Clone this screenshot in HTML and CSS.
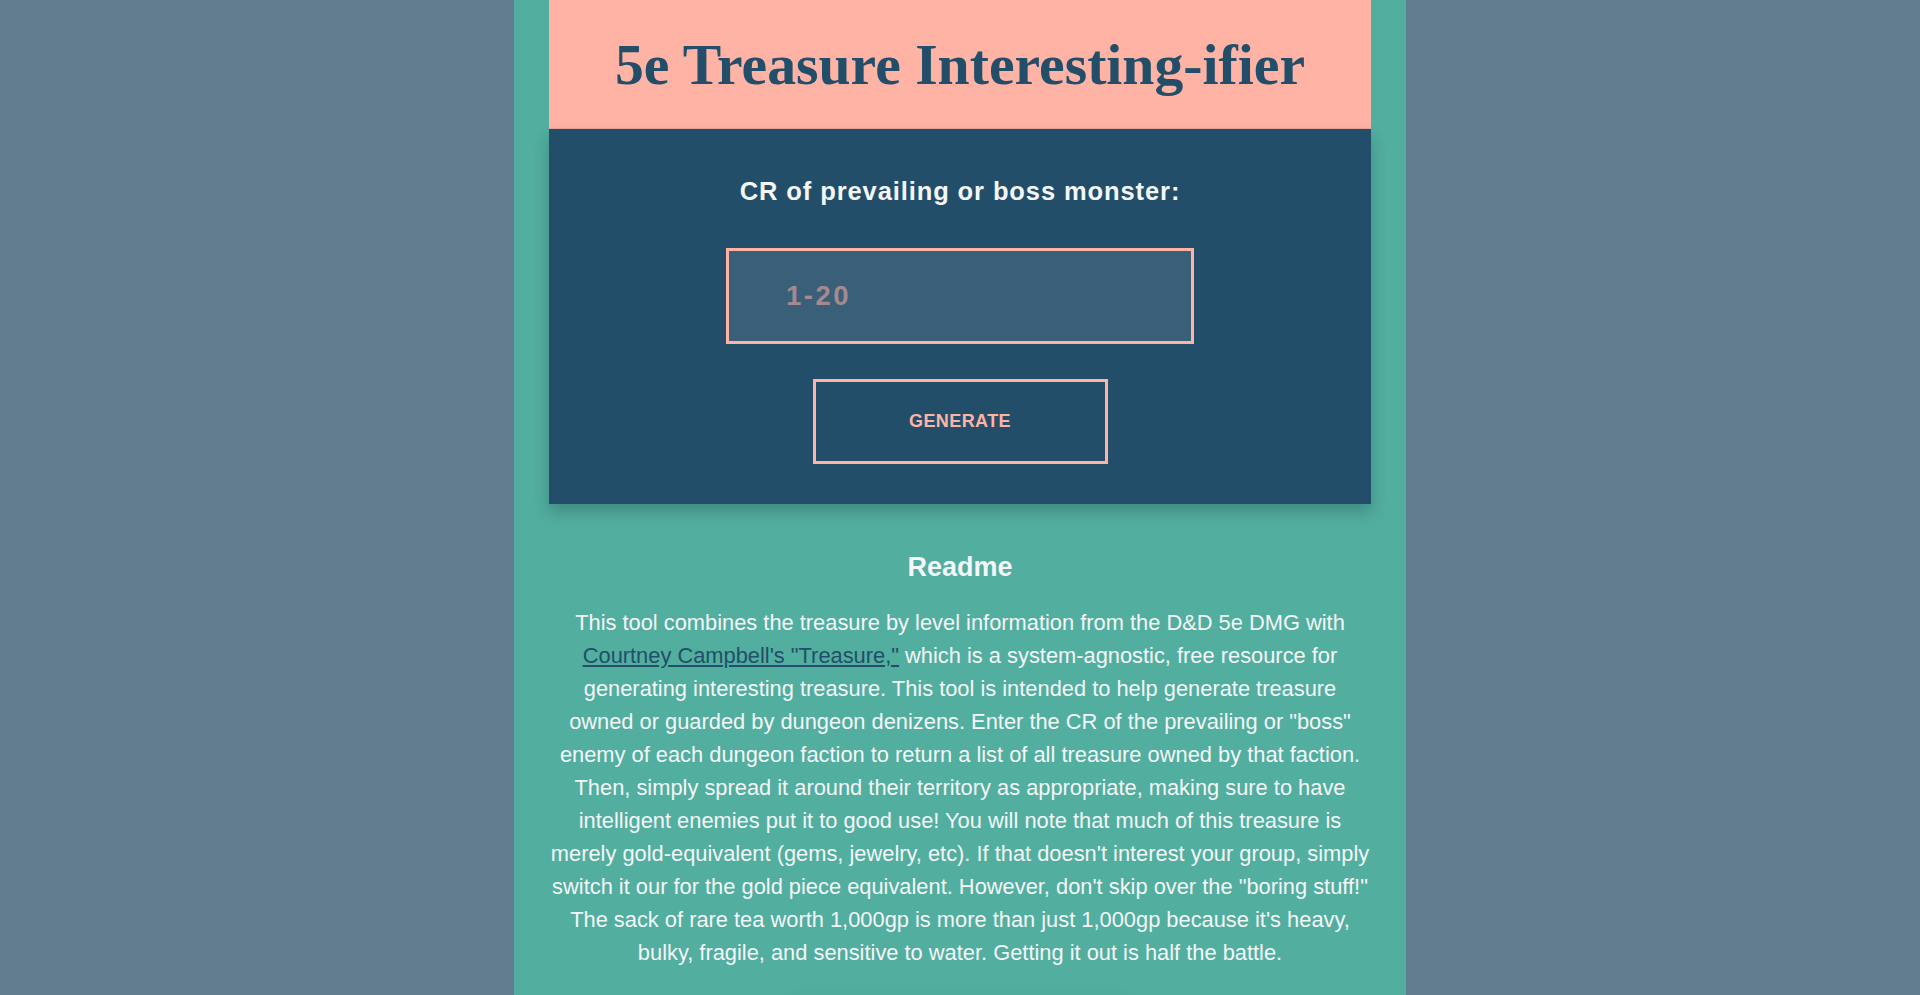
FILE: index.html
```html
<!DOCTYPE html>
<html lang="en">
<head>
<meta charset="utf-8">
<title>5e Treasure Interesting-ifier</title>
<link rel="stylesheet" href="styles.css">
</head>
<body>
<main class="page">
  <header class="banner">
    <h1 class="title">5e Treasure Interesting-ifier</h1>
  </header>
  <section class="tool">
    <label class="tool-label" for="cr">CR of prevailing or boss monster:</label>
    <input class="cr-input" id="cr" type="text" placeholder="1-20">
    <button class="generate" type="button">GENERATE</button>
  </section>
  <section class="readme">
    <h2 class="readme-title">Readme</h2>
    <p class="readme-text">This tool combines the treasure by level information from the D&amp;D 5e DMG with <a class="readme-link" href="#">Courtney Campbell's "Treasure,"</a> which is a system-agnostic, free resource for generating interesting treasure. This tool is intended to help generate treasure owned or guarded by dungeon denizens. Enter the CR of the prevailing or "boss" enemy of each dungeon faction to return a list of all treasure owned by that faction. Then, simply spread it around their territory as appropriate, making sure to have intelligent enemies put it to good use! You will note that much of this treasure is merely gold-equivalent (gems, jewelry, etc). If that doesn't interest your group, simply switch it our for the gold piece equivalent. However, don't skip over the "boring stuff!" The sack of rare tea worth 1,000gp is more than just 1,000gp because it's heavy, bulky, fragile, and sensitive to water. Getting it out is half the battle.</p>
  </section>
  <div class="results"></div>
</main>
</body>
</html>
```
FILE: styles.css
```css
html, body {
  margin: 0;
  padding: 0;
}
body {
  background: #627d8f;
  font-family: "Liberation Sans", Arial, sans-serif;
}
.page {
  width: 892px;
  margin: 0 auto;
  padding: 0 35px 40px;
  box-sizing: border-box;
  background: #52ae9f;
  min-height: 100vh;
  display: flex;
  flex-direction: column;
}
.banner {
  height: 129px;
  background: #ffb3a5;
  display: flex;
  align-items: center;
  justify-content: center;
  border-bottom: 1px solid #e8a598;
  box-sizing: border-box;
}
.title {
  margin: 0;
  font-family: "Liberation Serif", "Times New Roman", serif;
  font-weight: bold;
  font-size: 57.7px;
  line-height: 1;
  color: #224e69;
  padding-top: 2px;
}
.tool {
  background: #224e69;
  height: 375px;
  box-sizing: border-box;
  padding-top: 48px;
  display: flex;
  flex-direction: column;
  align-items: center;
  box-shadow: 0 8px 14px rgba(20, 50, 60, 0.28);
  position: relative;
  z-index: 1;
}
.tool-label {
  color: #f4f6f7;
  font-weight: bold;
  font-size: 25.5px;
  letter-spacing: 0.9px;
  line-height: 29px;
}
.cr-input {
  margin-top: 42px;
  width: 468px;
  height: 96px;
  box-sizing: border-box;
  border: 3px solid #ffb3a5;
  background: #3a6079;
  padding: 0 0 0 57px;
  font-family: "Liberation Sans", Arial, sans-serif;
  font-weight: bold;
  font-size: 27.5px;
  letter-spacing: 2.5px;
  color: #f4f6f7;
  outline: none;
}
.cr-input::placeholder {
  color: #a48a90;
  opacity: 1;
}
.generate {
  margin-top: 35px;
  width: 295px;
  height: 85px;
  box-sizing: border-box;
  border: 3px solid #ffb3a5;
  background: transparent;
  color: #ffb3a5;
  font-family: "Liberation Sans", Arial, sans-serif;
  font-weight: bold;
  font-size: 18px;
  letter-spacing: 0.4px;
  padding: 0;
}
.readme {
  padding-top: 48px;
  text-align: center;
  color: #f4f6f7;
}
.readme-title {
  margin: 0;
  font-size: 27px;
  line-height: 31px;
  font-weight: bold;
}
.readme-text {
  margin: 23px 0 0;
  font-size: 21.85px;
  line-height: 33px;
}
.readme-link {
  color: #224e69;
}
.results {
  align-self: center;
  width: 330px;
  height: 60px;
  margin-top: 44px;
  box-shadow: 0 0 30px rgba(30, 70, 70, 0.18);
}
```
